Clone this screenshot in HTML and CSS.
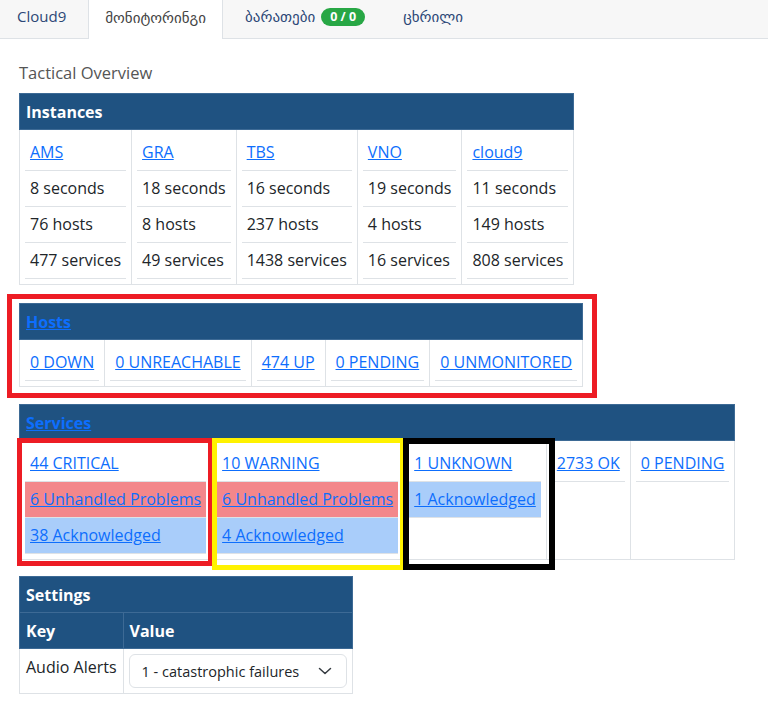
FILE: index.html
```html
<!DOCTYPE html>
<html>
<head>
  <meta charset="UTF-8">
  <meta name="viewport" content="width=device-width, initial-scale=1.0">
  <title>Tactical Overview</title>
  <link rel="stylesheet" href="styles.css">
</head>
<body>
  <nav class="tabs">
    <a class="tab" href="#">Cloud9</a>
    <a class="tab tab-active" href="#">მონიტორინგი</a>
    <a class="tab" href="#">ბარათები <span class="badge">0 / 0</span></a>
    <a class="tab" href="#">ცხრილი</a>
  </nav>

  <main class="content">
    <h2 class="page-title">Tactical Overview</h2>

    <table class="panel">
      <thead>
        <tr><th colspan="5">Instances</th></tr>
      </thead>
      <tbody>
        <tr>
          <td>
            <table class="stack">
              <tr><td><a href="#">AMS</a></td></tr>
              <tr><td>8 seconds</td></tr>
              <tr><td>76 hosts</td></tr>
              <tr><td>477 services</td></tr>
            </table>
          </td>
          <td>
            <table class="stack">
              <tr><td><a href="#">GRA</a></td></tr>
              <tr><td>18 seconds</td></tr>
              <tr><td>8 hosts</td></tr>
              <tr><td>49 services</td></tr>
            </table>
          </td>
          <td>
            <table class="stack">
              <tr><td><a href="#">TBS</a></td></tr>
              <tr><td>16 seconds</td></tr>
              <tr><td>237 hosts</td></tr>
              <tr><td>1438 services</td></tr>
            </table>
          </td>
          <td>
            <table class="stack">
              <tr><td><a href="#">VNO</a></td></tr>
              <tr><td>19 seconds</td></tr>
              <tr><td>4 hosts</td></tr>
              <tr><td>16 services</td></tr>
            </table>
          </td>
          <td>
            <table class="stack">
              <tr><td><a href="#">cloud9</a></td></tr>
              <tr><td>11 seconds</td></tr>
              <tr><td>149 hosts</td></tr>
              <tr><td>808 services</td></tr>
            </table>
          </td>
        </tr>
      </tbody>
    </table>

    <div class="callout">
      <table class="panel">
        <thead>
          <tr><th colspan="5"><a href="#">Hosts</a></th></tr>
        </thead>
        <tbody>
          <tr>
            <td><table class="stack"><tr><td><a href="#">0 DOWN</a></td></tr></table></td>
            <td><table class="stack"><tr><td><a href="#">0 UNREACHABLE</a></td></tr></table></td>
            <td><table class="stack"><tr><td><a href="#">474 UP</a></td></tr></table></td>
            <td><table class="stack"><tr><td><a href="#">0 PENDING</a></td></tr></table></td>
            <td><table class="stack"><tr><td><a href="#">0 UNMONITORED</a></td></tr></table></td>
          </tr>
        </tbody>
      </table>
    </div>

    <table class="panel services">
      <thead>
        <tr><th colspan="5"><a href="#">Services</a></th></tr>
      </thead>
      <tbody>
        <tr>
          <td class="mark mark-red">
            <table class="stack">
              <tr><td><a href="#">44 CRITICAL</a></td></tr>
              <tr class="row-unhandled"><td><a href="#">6 Unhandled Problems</a></td></tr>
              <tr class="row-ack"><td><a href="#">38 Acknowledged</a></td></tr>
            </table>
          </td>
          <td class="mark mark-yellow">
            <table class="stack">
              <tr><td><a href="#">10 WARNING</a></td></tr>
              <tr class="row-unhandled"><td><a href="#">6 Unhandled Problems</a></td></tr>
              <tr class="row-ack"><td><a href="#">4 Acknowledged</a></td></tr>
            </table>
          </td>
          <td class="mark mark-black">
            <table class="stack">
              <tr><td><a href="#">1 UNKNOWN</a></td></tr>
              <tr class="row-ack"><td><a href="#">1 Acknowledged</a></td></tr>
            </table>
          </td>
          <td>
            <table class="stack">
              <tr><td><a href="#">2733 OK</a></td></tr>
            </table>
          </td>
          <td>
            <table class="stack">
              <tr><td><a href="#">0 PENDING</a></td></tr>
            </table>
          </td>
        </tr>
      </tbody>
    </table>

    <table class="panel settings">
      <thead>
        <tr><th colspan="2">Settings</th></tr>
        <tr><th>Key</th><th>Value</th></tr>
      </thead>
      <tbody>
        <tr>
          <td class="key">Audio Alerts</td>
          <td>
            <div class="select-wrap">
              <select class="select">
                <option>1 - catastrophic failures</option>
              </select>
              <svg class="chevron" width="14" height="8" viewBox="0 0 14 8">
                <path d="M1.5 1.5l5.5 5 5.5-5" fill="none" stroke="#343a40" stroke-width="1.5" stroke-linecap="round" stroke-linejoin="round"/>
              </svg>
            </div>
          </td>
        </tr>
      </tbody>
    </table>
  </main>
</body>
</html>
```

FILE: styles.css
```css
* {
  box-sizing: border-box;
}

body {
  margin: 0;
  background-color: #fff;
  color: #212529;
  font-family: "Open Sans", "DejaVu Sans", sans-serif;
  font-size: 16px;
  line-height: 1.5;
}

a {
  color: #0d6efd;
}

/* tabs */

.tabs {
  display: flex;
  gap: 6px;
  height: 39px;
  padding-left: 1px;
  background-color: #f7f7f7;
  border-bottom: 1px solid #dee2e6;
  font-size: 15px;
}

.tab {
  display: flex;
  align-items: center;
  gap: 6px;
  padding: 0 16px 5px;
  color: #2c4776;
  text-decoration: none;
}

.tab-active {
  margin-bottom: -1px;
  background-color: #fff;
  border-left: 1px solid #dee2e6;
  border-right: 1px solid #dee2e6;
  color: #444;
}

.badge {
  padding: 2px 9px;
  border-radius: 10px;
  background-color: #28a745;
  color: #fff;
  font-size: 12.5px;
  font-weight: 700;
  line-height: 14px;
}

/* page */

.content {
  padding: 0 19px 20px;
}

.page-title {
  margin: 0 0 8px;
  padding-top: 22px;
  color: #555;
  font-size: 16.5px;
  font-weight: 400;
  line-height: 24px;
}

.panel {
  border-collapse: collapse;
  margin-bottom: 18px;
}

.panel > thead > tr > th {
  padding: 6px 6px 5px;
  background-color: #1f5281;
  border: 1px solid #3d6a95;
  color: #fff;
  font-weight: 700;
  text-align: left;
  white-space: nowrap;
}

.panel > tbody > tr > td {
  padding: 5px;
  border: 1px solid #dee2e6;
  vertical-align: top;
}

.stack {
  width: 100%;
  border-collapse: collapse;
}

.stack td {
  padding: 5px 5px 6px;
  border-bottom: 1px solid #dee2e6;
  white-space: nowrap;
}

.row-unhandled td {
  background-color: #f3878b;
}

.row-ack td {
  background-color: #a9cdfa;
}

.services {
  margin-bottom: 16px;
}

/* annotation boxes */

.callout {
  width: fit-content;
  margin: -9px 0 6px -12px;
  padding: 4px 9px 6px 7px;
  border: 5px solid #ed1c24;
}

.callout .panel {
  margin-bottom: 0;
}

.mark {
  position: relative;
}

.mark::after {
  content: "";
  position: absolute;
  border: 5px solid;
  pointer-events: none;
}

.mark-red::after {
  top: -3px;
  left: -3px;
  right: -2px;
  bottom: -7px;
  border-color: #ed1c24;
}

.mark-yellow::after {
  top: -3px;
  left: 0;
  right: -2px;
  bottom: -11px;
  border-color: #fff200;
}

.mark-black::after {
  top: -3px;
  left: -1px;
  right: -9px;
  bottom: -11px;
  border-width: 6px;
  border-color: #000;
}

/* settings */

.settings > tbody > tr > td.key {
  padding: 6px;
}

.select-wrap {
  position: relative;
  width: 218px;
}

.select {
  display: block;
  width: 100%;
  height: 34px;
  padding: 0 36px 0 12px;
  appearance: none;
  background-color: #fff;
  border: 1px solid #dee2e6;
  border-radius: 6px;
  color: #212529;
  font-family: inherit;
  font-size: 14.5px;
}

.chevron {
  position: absolute;
  top: 13px;
  right: 15px;
}
```
